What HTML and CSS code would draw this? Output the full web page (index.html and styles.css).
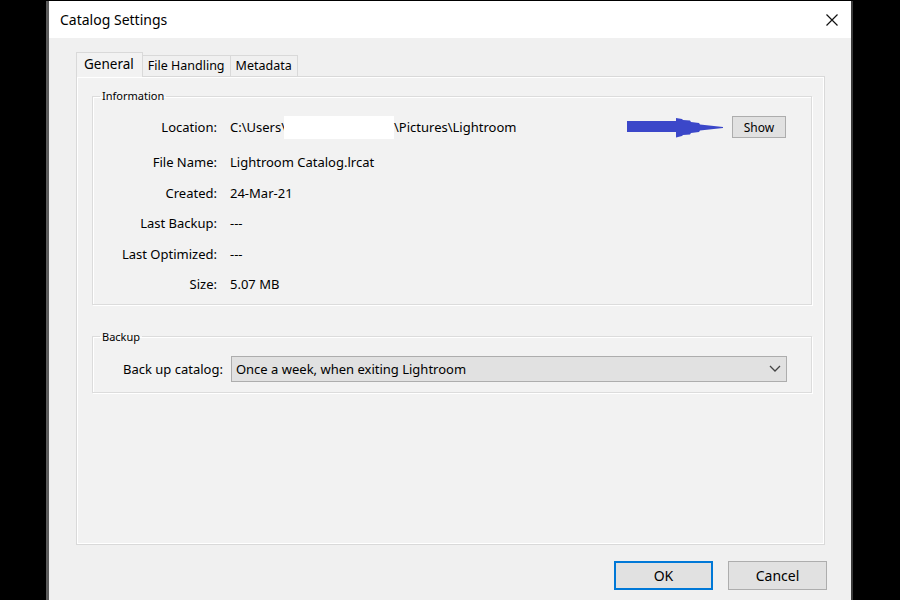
FILE: index.html
```html
<!DOCTYPE html>
<html lang="en">
<head>
    <meta charset="UTF-8">
    <title>Catalog Settings</title>
    <link rel="stylesheet" href="styles.css">
</head>
<body>
    <div class="dialog">
        <div class="titlebar">
            <span class="title">Catalog Settings</span>
            <svg class="close" width="12" height="12" viewBox="0 0 12 12">
                <path d="M0.5 0.5 L11.5 11.5 M11.5 0.5 L0.5 11.5" stroke="#111" stroke-width="1.2" fill="none"/>
            </svg>
        </div>
        <div class="content">
            <div class="tabs">
                <div class="tab selected">General</div>
                <div class="tab">File Handling</div>
                <div class="tab">Metadata</div>
            </div>
            <div class="panel">
                <fieldset class="group">
                    <legend>Information</legend>
                    <div class="info">
                        <div class="info-row first">
                            <span class="label">Location:</span>
                            <div class="location">
                                <span>C:\Users\</span><span class="redact"></span><span>\Pictures\Lightroom</span>
                                <svg class="arrow" width="96" height="21" viewBox="0 0 96 21">
                                    <polygon points="0,4 49,4 49,1 55,2 56,3 63,3.5 64,5 72,6 73,7.5 96,10 96,11 73,13.5 72,15 64,16 63,17.5 56,18 55,19 49,20.5 49,15 0,15" fill="#3b47c9"/>
                                </svg>
                                <button class="btn-show">Show</button>
                            </div>
                        </div>
                        <div class="info-row">
                            <span class="label">File Name:</span>
                            <span>Lightroom Catalog.lrcat</span>
                        </div>
                        <div class="info-row">
                            <span class="label">Created:</span>
                            <span>24-Mar-21</span>
                        </div>
                        <div class="info-row">
                            <span class="label">Last Backup:</span>
                            <span>---</span>
                        </div>
                        <div class="info-row">
                            <span class="label">Last Optimized:</span>
                            <span>---</span>
                        </div>
                        <div class="info-row">
                            <span class="label">Size:</span>
                            <span>5.07 MB</span>
                        </div>
                    </div>
                </fieldset>

                <fieldset class="group backup">
                    <legend>Backup</legend>
                    <div class="backup-row">
                        <span>Back up catalog:</span>
                        <div class="select">
                            <span>Once a week, when exiting Lightroom</span>
                            <svg width="12" height="7" viewBox="0 0 12 7">
                                <path d="M1 1 L6 6 L11 1" stroke="#444" stroke-width="1.3" fill="none"/>
                            </svg>
                        </div>
                    </div>
                </fieldset>
            </div>
            <div class="footer">
                <button class="btn default">OK</button>
                <button class="btn">Cancel</button>
            </div>
        </div>
    </div>
</body>
</html>
```

FILE: styles.css
```css
body {
    margin: 0;
    background-color: #000;
    font-family: "Noto Sans", sans-serif;
    color: #000;
    height: 600px;
    overflow: hidden;
}
.dialog {
    margin: 1px 0 0 46px;
    width: 802px;
    height: 599px;
    overflow: hidden;
    background-color: #f0f0f0;
    border-left: 3px solid #5c5c5c;
    border-right: 2px solid #3a3a3a;
}
.titlebar {
    height: 37px;
    background-color: #fff;
    display: flex;
    align-items: center;
    justify-content: space-between;
    padding: 0 13px 0 11px;
}
.title {
    font-size: 14px;
}
.content {
    padding: 14px 26px 0 27px;
}
.tabs {
    display: flex;
    align-items: flex-end;
    height: 24px;
}
.tab {
    height: 21px;
    box-sizing: border-box;
    border: 1px solid #d9d9d9;
    border-bottom: none;
    margin-left: -1px;
    padding: 0 5px;
    font-size: 12.5px;
    line-height: 20px;
    background-color: #f0f0f0;
}
.tab.selected {
    margin-left: 0;
    height: 25px;
    margin-bottom: -1px;
    padding: 0 8px 0 7px;
    line-height: 23px;
    font-size: 13.5px;
    background-color: #f2f2f2;
    position: relative;
    z-index: 1;
}
.panel {
    height: 469px;
    box-sizing: border-box;
    border: 1px solid #d9d9d9;
    box-shadow: inset 1px 1px 0 #fff, inset -1px -1px 0 #fff;
    background-color: #f2f2f2;
    padding: 13px 12px 0 15px;
}
.group {
    margin: 0;
    padding: 0;
    min-width: 0;
    border: 1px solid #dcdcdc;
    box-shadow: inset 1px 1px 0 #fff, 1px 1px 0 #fff;
}
.group legend {
    font-size: 11px;
    line-height: 12px;
    padding: 0 2px;
    margin-left: 7px;
}
.info {
    padding: 10px 25px 4px 0;
    font-size: 13px;
}
.info-row {
    display: grid;
    grid-template-columns: 124px 1fr;
    column-gap: 13px;
    align-items: center;
    height: 30.5px;
}
.info-row.first {
    height: 30px;
    margin-bottom: 5px;
}
.label {
    text-align: right;
}
.location {
    display: flex;
    align-items: center;
}
.redact {
    display: inline-block;
    width: 110px;
    height: 23px;
    margin-left: -2px;
    background-color: #fff;
}
.arrow {
    margin-left: auto;
    margin-right: 9px;
}
.btn-show {
    width: 54px;
    height: 22px;
    font-family: "Noto Sans", sans-serif;
    font-size: 12px;
    background-color: #e1e1e1;
    border: 1px solid #adadad;
    padding: 0;
}
.backup {
    margin-top: 26px;
}
.backup-row {
    display: flex;
    align-items: center;
    gap: 8px;
    padding: 13px 24px 10px 30px;
    font-size: 13px;
}
.select {
    flex: 1;
    height: 26px;
    box-sizing: border-box;
    display: flex;
    align-items: center;
    justify-content: space-between;
    padding: 0 5px 0 4px;
    background-color: #e1e1e1;
    border: 1px solid #adadad;
}
.footer {
    display: flex;
    justify-content: flex-end;
    gap: 15px;
    padding-top: 16px;
    margin-right: -2px;
}
.btn {
    width: 99px;
    height: 29px;
    font-family: "Noto Sans", sans-serif;
    font-size: 14px;
    background-color: #e1e1e1;
    border: 1px solid #adadad;
    padding: 0;
}
.btn.default {
    border: 2px solid #0078d7;
}
```
